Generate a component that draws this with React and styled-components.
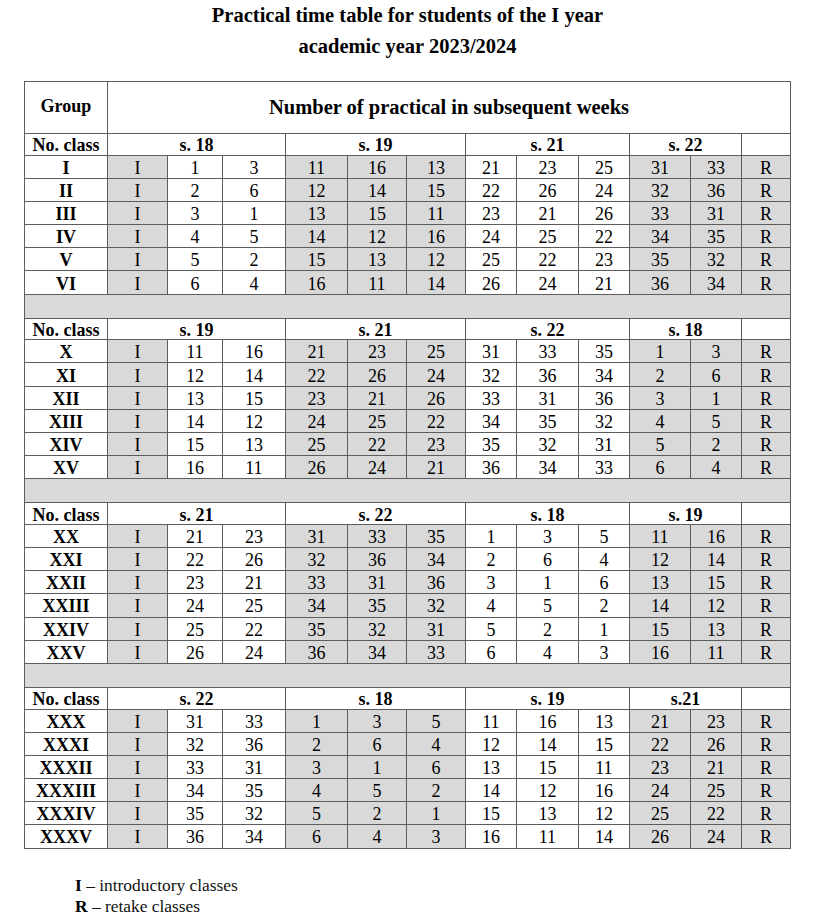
import styled, { createGlobalStyle } from 'styled-components';

const GlobalStyle = createGlobalStyle`
  body {
    margin: 0;
    background: #fff;
    font-family: 'Liberation Serif', 'Times New Roman', serif;
    color: #000;
  }
`;

const COL_WIDTHS = [83, 60, 55, 63, 62, 59, 59, 51, 62, 51, 61, 51, 49];
const SHADED = [false, true, false, false, true, true, true, false, false, false, true, true, true];
const SPANS = [3, 3, 3, 2];

const BLOCKS = [
  {
    weeks: ['s. 18', 's. 19', 's. 21', 's. 22'],
    rows: [
      ['I', '1', '3', '11', '16', '13', '21', '23', '25', '31', '33'],
      ['II', '2', '6', '12', '14', '15', '22', '26', '24', '32', '36'],
      ['III', '3', '1', '13', '15', '11', '23', '21', '26', '33', '31'],
      ['IV', '4', '5', '14', '12', '16', '24', '25', '22', '34', '35'],
      ['V', '5', '2', '15', '13', '12', '25', '22', '23', '35', '32'],
      ['VI', '6', '4', '16', '11', '14', '26', '24', '21', '36', '34'],
    ],
  },
  {
    weeks: ['s. 19', 's. 21', 's. 22', 's. 18'],
    rows: [
      ['X', '11', '16', '21', '23', '25', '31', '33', '35', '1', '3'],
      ['XI', '12', '14', '22', '26', '24', '32', '36', '34', '2', '6'],
      ['XII', '13', '15', '23', '21', '26', '33', '31', '36', '3', '1'],
      ['XIII', '14', '12', '24', '25', '22', '34', '35', '32', '4', '5'],
      ['XIV', '15', '13', '25', '22', '23', '35', '32', '31', '5', '2'],
      ['XV', '16', '11', '26', '24', '21', '36', '34', '33', '6', '4'],
    ],
  },
  {
    weeks: ['s. 21', 's. 22', 's. 18', 's. 19'],
    rows: [
      ['XX', '21', '23', '31', '33', '35', '1', '3', '5', '11', '16'],
      ['XXI', '22', '26', '32', '36', '34', '2', '6', '4', '12', '14'],
      ['XXII', '23', '21', '33', '31', '36', '3', '1', '6', '13', '15'],
      ['XXIII', '24', '25', '34', '35', '32', '4', '5', '2', '14', '12'],
      ['XXIV', '25', '22', '35', '32', '31', '5', '2', '1', '15', '13'],
      ['XXV', '26', '24', '36', '34', '33', '6', '4', '3', '16', '11'],
    ],
  },
  {
    weeks: ['s. 22', 's. 18', 's. 19', 's.21'],
    rows: [
      ['XXX', '31', '33', '1', '3', '5', '11', '16', '13', '21', '23'],
      ['XXXI', '32', '36', '2', '6', '4', '12', '14', '15', '22', '26'],
      ['XXXII', '33', '31', '3', '1', '6', '13', '15', '11', '23', '21'],
      ['XXXIII', '34', '35', '4', '5', '2', '14', '12', '16', '24', '25'],
      ['XXXIV', '35', '32', '5', '2', '1', '15', '13', '12', '25', '22'],
      ['XXXV', '36', '34', '6', '4', '3', '16', '11', '14', '26', '24'],
    ],
  },
];

const Page = styled.div`
  width: 815px;
  padding-bottom: 4px;
`;

const Title = styled.h1`
  margin: 0;
  text-align: center;
  font-size: 20.5px;
  font-weight: bold;
  line-height: 31px;
`;

const Table = styled.table`
  margin: 19px auto 0;
  width: 766px;
  border-collapse: collapse;
  table-layout: fixed;
  border: 1px solid #6b6b6b;
`;

const Row = styled.tr`
  height: ${(p) => p.$h}px;
`;

const Cell = styled.td`
  padding: 2px 0 0;
  border: 1px solid #5c5c5c;
  background: ${(p) => (p.$shade ? '#d9d9d9' : '#fff')};
  font-size: ${(p) => p.$size || 18}px;
  font-weight: ${(p) => (p.$bold ? 'bold' : 'normal')};
  line-height: 1;
  text-align: center;
  vertical-align: middle;
  white-space: nowrap;
  color: #000;
`;

const HeadCell = styled(Cell)`
  padding: 0 0 ${(p) => p.$lift || 0}px;
`;

const Legend = styled.div`
  margin: 26px 0 0 75px;
  font-size: 17.4px;
  line-height: 21px;
  color: #111;

  b {
    color: #000;
  }
`;

const Block = ({ block, last }) => (
  <>
    <Row $h={21.7}>
      <Cell $bold>No. class</Cell>
      {block.weeks.map((w, i) => (
        <Cell key={w + i} colSpan={SPANS[i]} $bold>
          {w}
        </Cell>
      ))}
      <Cell />
    </Row>
    {block.rows.map((r) => (
      <Row key={r[0]} $h={23.17}>
        <Cell $bold>{r[0]}</Cell>
        <Cell $shade>I</Cell>
        {r.slice(1).map((v, i) => (
          <Cell key={i} $shade={SHADED[i + 2]}>
            {v}
          </Cell>
        ))}
        <Cell $shade>R</Cell>
      </Row>
    ))}
    {!last && (
      <Row $h={24}>
        <Cell colSpan={13} $shade />
      </Row>
    )}
  </>
);

export default function App() {
  return (
    <Page>
      <GlobalStyle />
      <Title>
        Practical time table for students of the I year
        <br />
        academic year 2023/2024
      </Title>
      <Table>
        <colgroup>
          {COL_WIDTHS.map((w, i) => (
            <col key={i} style={{ width: w }} />
          ))}
        </colgroup>
        <tbody>
          <Row $h={52}>
            <HeadCell $bold $lift={4}>Group</HeadCell>
            <HeadCell colSpan={12} $bold $size={20.5} $lift={0}>
              Number of practical in subsequent weeks
            </HeadCell>
          </Row>
          {BLOCKS.map((b, i) => (
            <Block key={i} block={b} last={i === BLOCKS.length - 1} />
          ))}
        </tbody>
      </Table>
      <Legend>
        <b>I</b> – introductory classes
        <br />
        <b>R</b> – retake classes
      </Legend>
    </Page>
  );
}
